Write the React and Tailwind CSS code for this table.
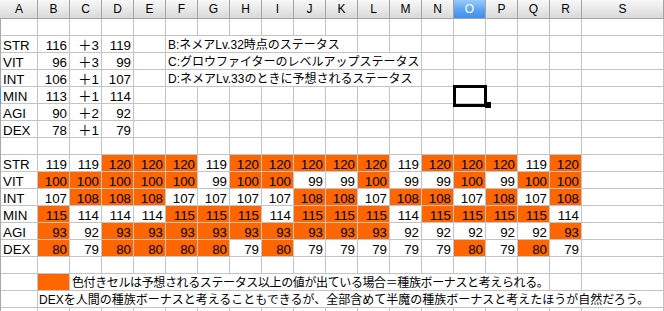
import React from "react";

const COLS = ["A","B","C","D","E","F","G","H","I","J","K","L","M","N","O","P","Q","R","S"];
const W = { A: "w-[37px]", S: "w-[82px]", n: "w-[32px]", s6: "w-[192px]", s8: "w-[256px]", s15: "w-[480px]", s17: "w-[626px]" };
const FONT = { fontFamily: '"Liberation Sans", Arial, "Noto Sans CJK JP", sans-serif' };

function H({ label }) {
  const sel = label === "O";
  const w = label === "A" ? W.A : label === "S" ? W.S : W.n;
  return (
    <div
      className={`${w} h-[19px] shrink-0 border-r border-b border-[#a3a3a3] text-center text-[12px] leading-[19px] ${
        sel ? "bg-linear-to-b from-[#9ccafb] via-[#5da7f4] to-[#3f8fe6] text-white" : "bg-linear-to-b from-[#f8f8f8] to-[#dadada] text-black"
      }`}
    >
      {label}
    </div>
  );
}

function C({ w = W.n, children, right, orange, cls = "" }) {
  return (
    <div
      className={`${w} h-[17px] shrink-0 overflow-hidden whitespace-nowrap border-r border-b border-[#c4c4c4] text-[13.33px] leading-[19px] text-black ${
        right ? "text-right pr-[2px]" : "pl-[2px]"
      } ${orange ? "bg-[#ff6600]" : "bg-white"} ${cls}`}
    >
      {children}
    </div>
  );
}

function Row({ children, sel }) {
  return (
    <div className="flex">
      <div className={`w-[1px] h-[17px] shrink-0 ${sel ? "bg-[#4f9bef]" : "bg-[#a8a8a8]"}`} />
      {children}
    </div>
  );
}

function Empties({ from, to }) {
  const out = [];
  for (let i = from; i <= to; i++) {
    const l = COLS[i];
    out.push(<C key={l} w={l === "A" ? W.A : l === "S" ? W.S : W.n} />);
  }
  return out;
}

const top = [
  ["STR", 116, "＋3", 119],
  ["VIT", 96, "＋3", 99],
  ["INT", 106, "＋1", 107],
  ["MIN", 113, "＋1", 114],
  ["AGI", 90, "＋2", 92],
  ["DEX", 78, "＋1", 79],
];

const bottom = [
  ["STR", 119, [119,119,120,120,120,119,120,120,120,120,120,119,120,120,120,119,120]],
  ["VIT", 99, [100,100,100,100,100,99,100,100,99,99,100,99,99,100,99,100,100]],
  ["INT", 107, [107,108,108,108,107,107,107,107,108,108,107,108,108,107,108,107,108]],
  ["MIN", 114, [115,114,114,114,115,115,115,114,115,115,115,114,115,115,115,115,114]],
  ["AGI", 92, [93,92,93,93,93,93,93,93,93,93,93,92,92,92,92,92,93]],
  ["DEX", 79, [80,79,80,80,80,80,79,80,79,79,79,79,79,80,79,80,79]],
];

const notes = [
  { text: "B:ネメアLv.32時点のステータス", w: W.s6, end: 10 },
  { text: "C:グロウファイターのレベルアップステータス", w: W.s8, end: 12 },
  { text: "D:ネメアLv.33のときに予想されるステータス", w: W.s8, end: 12 },
];

export default function App() {
  return (
    <div className="relative w-[664px] h-[311px] overflow-hidden bg-white" style={FONT}>
      {/* header */}
      <div className="flex">
        <div className="w-[1px] h-[19px] shrink-0 border-b border-[#a3a3a3] bg-linear-to-b from-[#f8f8f8] to-[#dadada]" />
        {COLS.map((c) => <H key={c} label={c} />)}
      </div>

      <Row><Empties from={0} to={18} /></Row>

      {top.map((r, i) => (
        <Row key={r[0]} sel={i === 3}>
          <C w={W.A}>{r[0]}</C>
          <C right>{r[1]}</C>
          <C right>{r[2]}</C>
          <C right>{r[3]}</C>
          <C />
          {notes[i] ? (
            <>
              <C w={notes[i].w} cls="!text-[12px]">{notes[i].text}</C>
              <Empties from={notes[i].end + 1} to={18} />
            </>
          ) : (
            <Empties from={5} to={18} />
          )}
        </Row>
      ))}

      <Row><Empties from={0} to={18} /></Row>

      {bottom.map(([name, pred, vals]) => (
        <Row key={name}>
          <C w={W.A}>{name}</C>
          {vals.map((v, j) => (
            <C key={j} right orange={v > pred}>{v}</C>
          ))}
          <C w={W.S} />
        </Row>
      ))}

      <Row><Empties from={0} to={18} /></Row>

      <Row>
        <C w={W.A} />
        <C orange />
        <C w={W.s15} cls="!text-[12px] tracking-[-0.38px]">色付きセルは予想されるステータス以上の値が出ている場合＝種族ボーナスと考えられる。</C>
        <C />
        <C w={W.S} />
      </Row>

      <Row>
        <C w={W.A} />
        <C w={W.s17} cls="!text-[12px] !pl-[1px]">DEXを人間の種族ボーナスと考えることもできるが、全部含めて半魔の種族ボーナスと考えたほうが自然だろう。</C>
      </Row>

      <Row><Empties from={0} to={18} /></Row>

      {/* selection */}
      <div className="absolute left-[453px] top-[85px] w-[34px] h-[22px] border-[3px] border-black" />
      <div className="absolute left-[485px] top-[102px] w-[6px] h-[6px] bg-black" />
    </div>
  );
}
